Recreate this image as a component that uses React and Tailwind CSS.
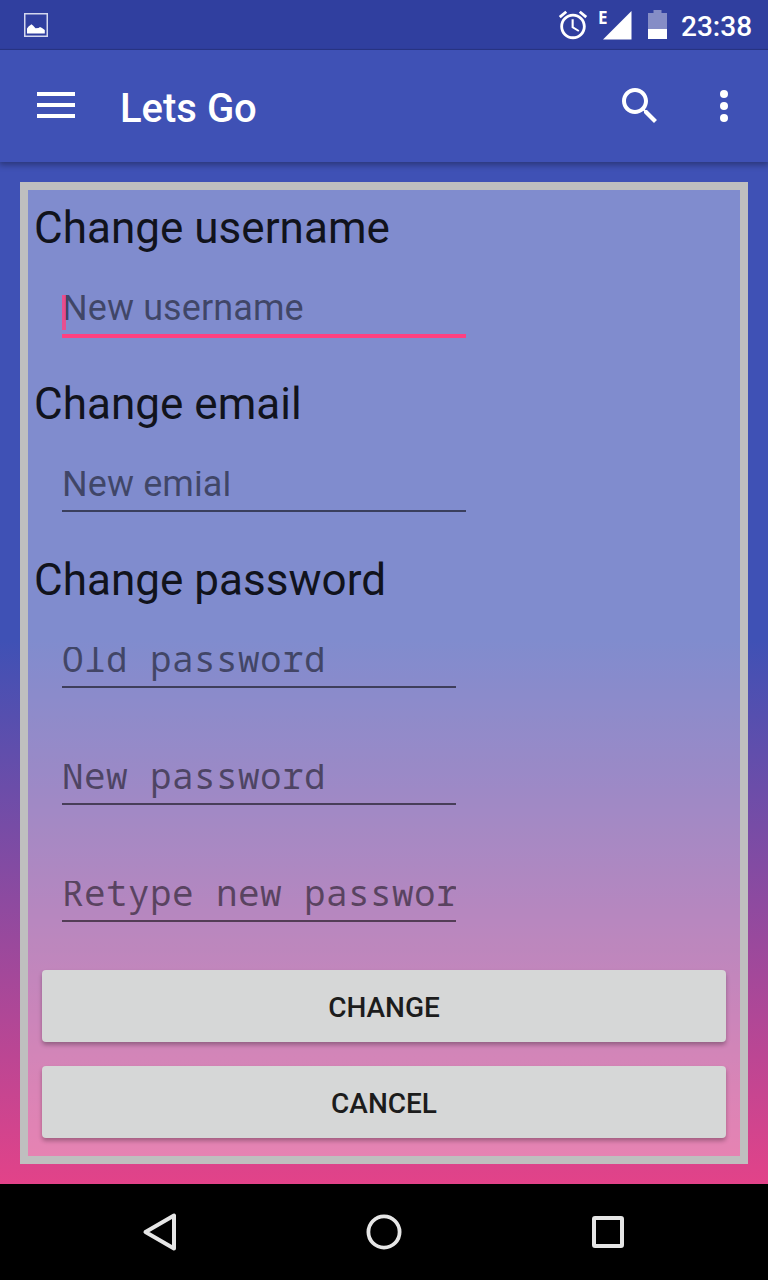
import React from "react";

function PictureIcon() {
  return (
    <svg className="h-6 w-6" viewBox="0 0 24 24" fill="none">
      <rect x="0.75" y="0.75" width="22.5" height="22.5" stroke="#d3d7ee" strokeWidth="1.5" />
      <path d="M3 20.5V15.5L5 13L6 12.6L7.3 11.3L9 12.6L11.5 15.3L14.5 15L16 14L18 15L20.8 17V20.5Z" fill="#fff" />
    </svg>
  );
}

function AlarmIcon() {
  return (
    <svg className="h-[34px] w-[34px]" viewBox="0 0 24 24" fill="#fff">
      <path d="M22 5.72l-4.6-3.86-1.29 1.53 4.6 3.86L22 5.72zM7.88 3.39L6.6 1.86 2 5.71l1.29 1.53 4.59-3.85zM12.5 8H11v6l4.75 2.85.75-1.23-4-2.37V8zM12 4c-4.97 0-9 4.03-9 9s4.02 9 9 9c4.97 0 9-4.03 9-9s-4.03-9-9-9zm0 16c-3.87 0-7-3.13-7-7s3.13-7 7-7 7 3.13 7 7-3.13 7-7 7z" />
    </svg>
  );
}

function StatusBar() {
  return (
    <div className="flex h-[50px] items-start bg-[#303f9f] pl-6 shadow-[inset_0_-2px_1px_-1px_rgba(0,0,0,0.2)]">
      <div className="mt-[13px]">
        <PictureIcon />
      </div>
      <div className="mt-2 ml-[508px]">
        <AlarmIcon />
      </div>
      <div className="relative mt-[11px] ml-[13px]">
        <svg className="h-[29px] w-[29px]" viewBox="0 0 29 29" fill="#fff">
          <path d="M28.5 0V28.5H0Z" />
        </svg>
        <span className="absolute -top-[3px] -left-[5px] font-['Noto_Sans',sans-serif] text-[17px] leading-5 font-bold text-white">E</span>
      </div>
      <svg className="mt-[10px] ml-4 h-[29px] w-[19px]" viewBox="0 0 19 29">
        <path d="M5.5 0H13.5V3H19V19H0V3H5.5Z" fill="#858dc6" />
        <path d="M0 19H19V29H0Z" fill="#fff" />
      </svg>
      <span className="mt-[11px] ml-[14px] text-[28px] leading-8 font-medium text-white">23:38</span>
    </div>
  );
}

function Toolbar() {
  return (
    <div className="flex h-28 items-center bg-[#3f51b5] pl-[37px] shadow-[0_2px_6px_1px_rgba(0,0,0,0.32)] [clip-path:inset(0_0_-12px_0)]">
      <div className="mb-[2px] flex w-[38px] flex-col gap-[7px]">
        <div className="h-1 bg-white" />
        <div className="h-1 bg-white" />
        <div className="h-1 bg-white" />
      </div>
      <h1 className="mt-[6px] ml-[45px] flex-1 text-[40px] leading-[48px] font-medium text-white">Lets Go</h1>
      <svg className="h-12 w-12" viewBox="0 0 24 24" fill="#fff">
        <path d="M15.5 14h-.79l-.28-.27C15.41 12.59 16 11.11 16 9.5 16 5.91 13.09 3 9.5 3S3 5.91 3 9.5 5.91 16 9.5 16c1.61 0 3.09-.59 4.23-1.57l.27.28v.79l5 4.99L20.49 19l-4.99-5zm-6 0C7.01 14 5 11.99 5 9.5S7.01 5 9.5 5 14 7.01 14 9.5 11.99 14 9.5 14z" />
      </svg>
      <svg className="mr-5 ml-9 h-12 w-12" viewBox="0 0 24 24" fill="#fff">
        <circle cx="12" cy="6" r="2" />
        <circle cx="12" cy="12" r="2" />
        <circle cx="12" cy="18" r="2" />
      </svg>
    </div>
  );
}

function Heading({ children }) {
  return <h2 className="h-[52px] pl-[6px] text-[44px] leading-[52px] tracking-[0.03px] text-[#11131c]">{children}</h2>;
}

function TextField({ hint, focused }) {
  return (
    <div className={focused ? "relative ml-[34px] h-[43px] w-[404px] border-b-4 border-[#ff4081]" : "ml-[34px] h-[41px] w-[404px] border-b-2 border-black/55"}>
      {focused && <div className="absolute top-0 left-0 h-[35px] w-1 bg-[#ff4081]/80" />}
      <div className="h-[36px] overflow-hidden">
        <div className="-mt-[8px] text-[36px] leading-[42px] tracking-[0.1px] whitespace-nowrap text-black/50">{hint}</div>
      </div>
    </div>
  );
}

function PasswordField({ hint }) {
  return (
    <div className="ml-[34px] h-[41px] w-[394px] border-b-2 border-black/55">
      <div className="h-[36px] overflow-hidden">
        <div className="-mt-[9px] font-['Noto_Sans_Mono','DejaVu_Sans_Mono',monospace] text-[36px] leading-[42px] tracking-[0.4px] whitespace-nowrap text-black/50">
          {hint}
        </div>
      </div>
    </div>
  );
}

function Button({ children }) {
  return (
    <button className="flex h-[72px] w-[684px] items-center justify-center rounded-[4px] bg-[#d6d7d7] pt-[4px] text-[28px] leading-8 font-medium text-[#1c1c1c] shadow-[0_3px_4px_0_rgba(0,0,0,0.28)]">
      {children}
    </button>
  );
}

function NavBar() {
  return (
    <div className="flex h-24 items-center justify-center gap-44 bg-black">
      <svg className="h-12 w-12" viewBox="0 0 48 48" fill="none" stroke="#e6e6e6" strokeWidth="4" strokeLinejoin="round">
        <path d="M9.5 24L38 7.5V40.5Z" />
      </svg>
      <svg className="h-12 w-12" viewBox="0 0 48 48" fill="none" stroke="#e6e6e6" strokeWidth="3.8">
        <circle cx="24" cy="24" r="15.6" />
      </svg>
      <svg className="h-12 w-12" viewBox="0 0 48 48" fill="none" stroke="#e6e6e6" strokeWidth="4">
        <rect x="10" y="10" width="28" height="28" rx="1" />
      </svg>
    </div>
  );
}

export default function App() {
  return (
    <div className="h-[1280px] w-[768px] overflow-hidden bg-[linear-gradient(180deg,#3f51b5_0%,#3f51b5_50%,#ff4081_100%)] font-['Roboto',sans-serif]">
      <StatusBar />
      <Toolbar />
      <main className="flex h-[1022px] flex-col px-5 pt-5 pb-5">
        <div className="flex h-[982px] flex-col border-8 border-[#bfbfbf] bg-white/34 bg-clip-padding pt-3">
          <Heading>Change username</Heading>
          <div className="mt-[41px] h-[83px]">
            <TextField hint="New username" focused />
          </div>
          <Heading>Change email</Heading>
          <div className="mt-[41px] h-[83px]">
            <TextField hint="New emial" />
          </div>
          <Heading>Change password</Heading>
          <div className="mt-[41px] flex flex-col gap-[76px]">
            <PasswordField hint="Old password" />
            <PasswordField hint="New password" />
            <PasswordField hint="Retype new password" />
          </div>
          <div className="mt-12 ml-[14px] flex flex-col gap-6">
            <Button>CHANGE</Button>
            <Button>CANCEL</Button>
          </div>
        </div>
      </main>
      <NavBar />
    </div>
  );
}
